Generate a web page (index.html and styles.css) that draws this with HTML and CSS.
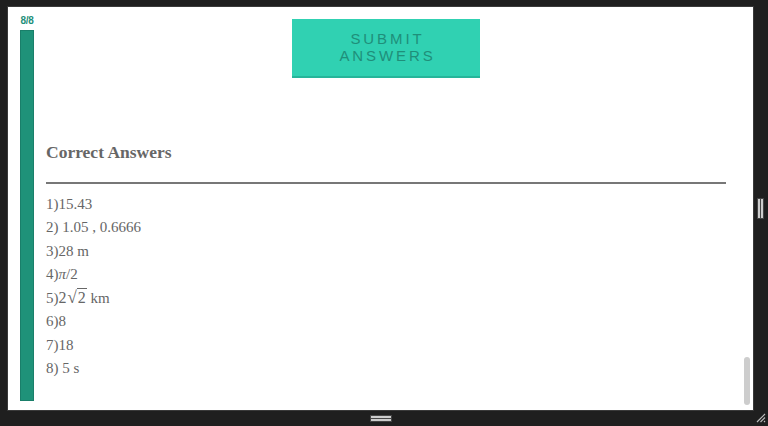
FILE: index.html
```html
<!DOCTYPE html>
<html>
<head>
<meta charset="utf-8">
<link rel="stylesheet" href="styles.css">
</head>
<body>
<div class="frame">
  <div class="panel">
    <div class="progress">
      <div class="count">8/8</div>
      <div class="bar"></div>
    </div>
    <div class="main">
      <div class="btn-row"><button class="submit">SUBMIT<br>ANSWERS</button></div>
      <h3 class="heading">Correct Answers</h3>
      <hr class="rule">
      <div class="answers">
        <div>1)15.43</div>
        <div>2) 1.05 , 0.6666</div>
        <div>3)28 m</div>
        <div>4)<i>π</i>/2</div>
        <div>5)<span class="m">2</span><span class="rad">√</span><span class="radicand">2</span> km</div>
        <div>6)8</div>
        <div>7)18</div>
        <div>8) 5 s</div>
      </div>
    </div>
    <div class="thumb"></div>
  </div>
  <div class="vgrip"><span></span><span></span></div>
  <div class="hgrip"><span></span><span></span></div>
  <div class="corner">
    <svg width="10" height="10" viewBox="0 0 10 10"><path d="M1 9 L9 1 M4.5 9 L9 4.5 M8 9 L9 8" stroke="#bbb" stroke-width="1.2"/></svg>
  </div>
</div>
</body>
</html>
```
FILE: styles.css
```css
html, body { margin: 0; padding: 0; }
body { background: #222; width: 768px; height: 426px; overflow: hidden; }
.frame {
  display: grid;
  grid-template-columns: 8px 745px 15px;
  grid-template-rows: 7px 403px 16px;
  width: 768px; height: 426px;
  background: #1f1f1f;
}
.panel {
  grid-column: 2; grid-row: 2;
  background: #fff;
  position: relative;
  overflow: hidden;
  display: flex;
  box-shadow: 0 0 0 1px #3a3a3a;
}
.progress {
  width: 14px;
  margin-left: 12px;
  display: flex; flex-direction: column; align-items: center;
  padding-top: 8px;
}
.count {
  font-family: "Liberation Sans", Arial, sans-serif;
  font-size: 10px; font-weight: bold; color: #1f8f7a;
  height: 15px; line-height: 12px; letter-spacing: -0.3px;
}
.bar {
  width: 14px; height: 371px;
  background: #1f9279;
  box-shadow: inset 0 0 0 1px #1a7f6a;
}
.main {
  flex: 1;
  margin-left: 12px; margin-right: 27px;
  display: flex; flex-direction: column;
  font-family: "Liberation Serif", "Times New Roman", serif;
  color: #666;
}
.btn-row { display: flex; justify-content: center; padding-top: 12px; }
.submit {
  width: 188px; height: 59px;
  border: none; border-bottom: 2px solid #26b59a;
  background: #30d1b2;
  color: #1f8f7a;
  font-family: "Liberation Sans", Arial, sans-serif;
  font-size: 15px; letter-spacing: 2.9px; line-height: 17px;
  padding: 0 0 1px 3px;
}
.heading {
  margin: 0; margin-top: 64px;
  font-size: 17.5px; font-weight: bold; line-height: 20px;
  color: #666;
}
.rule {
  margin: 20px 0 0; border: none; height: 2px; background: #777;
}
.answers { margin-top: 9px; font-size: 15px; line-height: 23.43px; }
.answers > div { height: 23.43px; }
.m { font-size: 16px; line-height: 0; }
.rad { font-size: 17px; margin-left: 1px; line-height: 0; }
.radicand { border-top: 1px solid #666; font-size: 16px; padding: 0 1px; line-height: 1; }
.thumb {
  position: absolute; right: 3px; bottom: 5px;
  width: 6px; height: 48px; border-radius: 3px; background: #cdcdcd;
}
.vgrip {
  grid-column: 3; grid-row: 2;
  display: flex; justify-content: center; align-items: center; gap: 1px;
}
.vgrip span { width: 2px; height: 19px; background: #ccc; box-shadow: 0 0 0 1px #444; }
.hgrip {
  grid-column: 2; grid-row: 3;
  display: flex; flex-direction: column; justify-content: center; align-items: center; gap: 1px;
}
.hgrip span { width: 20px; height: 2px; background: #ccc; box-shadow: 0 0 0 1px #444; }
.corner { grid-column: 3; grid-row: 3; display: flex; align-items: center; justify-content: center; }
.corner svg { display: block; }
```
